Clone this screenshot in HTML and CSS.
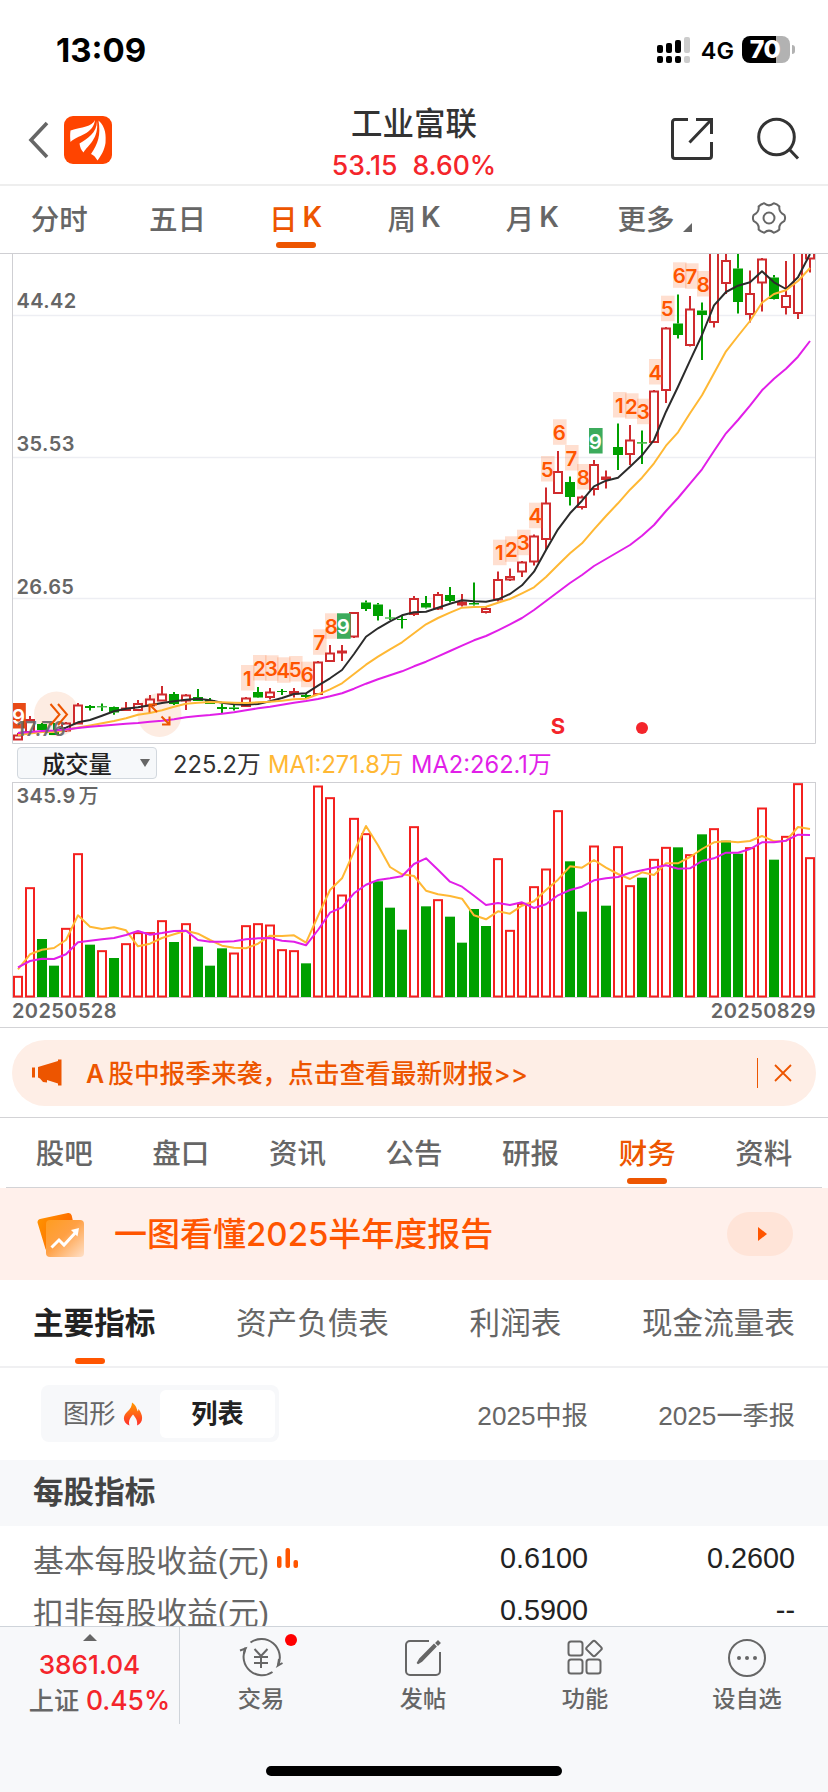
FILE: index.html
```html
<!DOCTYPE html>
<html lang="zh-CN">
<head>
    <meta charset="UTF-8">
    <meta name="viewport" content="width=device-width, initial-scale=1.0">
    <title>工业富联</title>
    <link rel="stylesheet" href="styles.css">
</head>
<body>
    <div class="app">
        <!-- Status bar -->
        <div class="status-bar">
            <div class="time">13:09</div>
            <div class="status-right">
                <svg class="signal" width="34" height="27" viewBox="0 0 34 27">
                    <g fill="#000">
                        <rect x="0" y="9" width="6" height="8" rx="2"/><rect x="9" y="7" width="6" height="10" rx="2"/><rect x="18" y="4" width="6" height="13" rx="2"/>
                        <rect x="0" y="20" width="6" height="7" rx="2"/><rect x="9" y="20" width="6" height="7" rx="2"/><rect x="18" y="20" width="6" height="7" rx="2"/>
                    </g>
                    <g fill="#ccc"><rect x="27" y="1" width="6" height="16" rx="2"/><rect x="27" y="20" width="6" height="7" rx="2"/></g>
                </svg>
                <span class="network">4G</span>
                <div class="battery">70</div>
            </div>
        </div>

        <!-- Header -->
        <header class="header">
            <div class="header-left">
                <svg class="back" width="22" height="38" viewBox="0 0 22 38"><path d="M19 2L3 19l16 17" fill="none" stroke="#666" stroke-width="3.6"/></svg>
                <svg width="48" height="48" viewBox="0 0 48 48">
                    <rect width="48" height="48" rx="9" fill="#ff4400"/>
                    <g fill="#fff">
                        <path d="M31 4C28 11 18 11 6.500 14.500C6 18 6 22 6.500 26C13 19 29 19 31 4z"/>
                        <path d="M33 5C33 17 23 23 15.500 27.500C16 31 17 34 19.500 36.500C24 29 35 23 33 5z"/>
                        <path d="M34.500 4.500C42 11 42 20 41.500 27C40.500 34 37 40 33.500 44.500C31.500 41 29.500 39 27 38C34 28 37 19 34.500 4.500z"/>
                    </g>
                </svg>
            </div>
            <div class="header-title">
                <h1>工业富联</h1>
                <div class="quote"><span>53.15</span><span>8.60%</span></div>
            </div>
            <div class="header-right">
                <svg width="44" height="44" viewBox="0 0 44 44" fill="none" stroke="#333" stroke-width="3">
                    <path d="M18 2.500H5a2.500 2.500 0 0 0-2.500 2.500v34a2.500 2.500 0 0 0 2.500 2.500h34a2.500 2.500 0 0 0 2.500-2.500V25M26 2.500h15.500V17M41.500 2.500L19.500 25.500"/>
                </svg>
                <svg width="44" height="44" viewBox="0 0 44 44" fill="none" stroke="#333" stroke-width="3"><circle cx="20.500" cy="20" r="17.800"/><path d="M33 32l9 9.500"/></svg>
            </div>
        </header>

        <!-- Period tabs -->
        <nav class="period-tabs">
            <div class="tab">分时</div>
            <div class="tab">五日</div>
            <div class="tab active">日<b>K</b></div>
            <div class="tab">周<b>K</b></div>
            <div class="tab">月<b>K</b></div>
            <div class="tab">更多<i class="corner"></i></div>
            <div class="tab settings">
                <svg width="36" height="36" viewBox="0 0 36 36" fill="none" stroke="#666" stroke-width="2" stroke-linejoin="round">
                    <path d="M33.200 14.800Q35 18 33.200 21.200Q27.500 24 28.400 29.500Q26 32 22.800 32.700Q18 28.500 13.200 32.700Q10 32 7.600 29.500Q8.500 24 2.800 21.200Q1 18 2.800 14.800Q8.500 12 7.600 6.500Q10 4 13.200 3.300Q18 7.500 22.800 3.300Q26 4 28.400 6.500Q27.500 12 33.200 14.800z"/>
                    <circle cx="18" cy="18" r="5.500"/>
                </svg>
            </div>
        </nav>

        <!-- Charts -->
        <svg class="price-chart" id="priceChart" viewBox="0 253 828 491"></svg>
        <div class="indicator-row">
            <div class="indicator-select">成交量<i class="caret"></i></div>
            <span class="vol">225.2万</span>
            <span class="ma1">MA1:271.8万</span>
            <span class="ma2">MA2:262.1万</span>
        </div>
        <svg class="volume-chart" id="volumeChart" viewBox="0 782 828 216"></svg>
        <div class="date-range"><span>20250528</span><span>20250829</span></div>

        <!-- Notice -->
        <div class="notice">
            <div class="notice-pill">
                <svg width="32" height="28" viewBox="0 0 32 28" fill="#ed5500"><path d="M1 8.500h3v10H1zM7 8l20-6V.500h3.500v26H27v-2l-11-3.500v2.500l-4-.500-3-3.500-2-1z"/></svg>
                <span class="notice-text"><b>A</b>股中报季来袭，点击查看最新财报&gt;&gt;</span>
                <span class="notice-divider"></span>
                <svg width="18" height="18" viewBox="0 0 18 18" stroke="#ed5500" stroke-width="1.800"><path d="M1 1l16 16M17 1L1 17"/></svg>
            </div>
        </div>

        <!-- Content tabs -->
        <nav class="content-tabs">
            <div class="tab">股吧</div>
            <div class="tab">盘口</div>
            <div class="tab">资讯</div>
            <div class="tab">公告</div>
            <div class="tab">研报</div>
            <div class="tab active">财务</div>
            <div class="tab">资料</div>
        </nav>

        <div class="report-banner">
            <svg class="report-icon" width="54" height="54" viewBox="0 0 54 54">
                <defs>
                    <linearGradient id="cardBack" x1="0" y1="0" x2="1" y2="0.4"><stop offset="0" stop-color="#ff9500"/><stop offset="1" stop-color="#ff6200"/></linearGradient>
                    <linearGradient id="cardFront" x1="0" y1="0" x2="1" y2="1"><stop offset="0" stop-color="#ff9d20"/><stop offset="0.450" stop-color="#ffa044"/><stop offset="1" stop-color="#ffe0c8"/></linearGradient>
                </defs>
                <path d="M5 9l28-6q3-.500 3.700 2.500L44 38l-31 3q-2 0-2.500-2L2.500 12.500Q2.500 9.500 5 9z" fill="url(#cardBack)"/>
                <rect x="11" y="10" width="38" height="37" rx="4" fill="url(#cardFront)"/>
                <path d="M16.500 37.500l7.500-7.500 5 5L41 22" fill="none" stroke="#fff" stroke-width="3"/><path d="M36 20l8-2-1.500 8.500z" fill="#fff"/>
            </svg>
            <span class="report-title">一图看懂2025半年度报告</span>
            <span class="report-more"><i></i></span>
        </div>

        <!-- Financial tables -->
        <nav class="finance-tabs">
            <div class="tab active">主要指标</div>
            <div class="tab">资产负债表</div>
            <div class="tab">利润表</div>
            <div class="tab">现金流量表</div>
        </nav>
        <div class="table-head">
            <div class="toggle">
                <div class="toggle-item">图形
                    <svg width="20" height="24" viewBox="0 0 20 24">
                        <defs><linearGradient id="flame" x1="0" y1="0" x2="0" y2="1"><stop offset="0" stop-color="#ff9a00"/><stop offset="1" stop-color="#ff2d2d"/></linearGradient></defs>
                        <path d="M9 .500C14 4 13.500 7.500 15 9.500l.500-2.500C21 14 20 21 14 23.500 15 18 12 15 10 12.500 7 16 5 19 6.500 23.500-.500 21-.500 14 4 10 7.500 7 9 4 9 .500z" fill="url(#flame)"/>
                    </svg>
                </div>
                <div class="toggle-item selected">列表</div>
            </div>
            <span class="col">2025中报</span>
            <span class="col">2025一季报</span>
        </div>
        <div class="section-title">每股指标</div>
        <div class="table-body">
            <div class="row">
                <span class="name">基本每股收益(元)
                    <svg width="22" height="22" viewBox="0 0 22 22" fill="#ff5500"><rect x="0" y="9" width="4.500" height="12" rx="2"/><rect x="8.500" y="1" width="4.500" height="20" rx="2"/><rect x="16.500" y="13" width="4.500" height="8" rx="2"/></svg>
                </span>
                <span class="col">0.6100</span>
                <span class="col">0.2600</span>
            </div>
            <div class="row">
                <span class="name">扣非每股收益(元)</span>
                <span class="col">0.5900</span>
                <span class="col">--</span>
            </div>
        </div>

        <!-- Bottom bar -->
        <footer class="bottom-bar">
            <div class="bottom-items">
                <div class="index">
                    <i class="up"></i>
                    <div class="index-value">3861.04</div>
                    <div class="index-change">上证 <span>0.45%</span></div>
                </div>
                <div class="item">
                    <svg width="46" height="42" viewBox="0 0 46 42" fill="none" stroke="#666" stroke-width="2">
                        <path d="M12.500 5.500A18.500 18.500 0 0 1 40 28.500l4.500-2.500M2 13.500l5.500-2A18.500 18.500 0 0 0 34.500 35"/>
                        <path d="M7.500 10.500L6 17M40 28.500L41 22"/>
                        <path d="M16.500 12l6.500 7 6.500-7M16 20h14M16 26h14M23 19v12"/>
                    </svg>
                    <span>交易</span>
                    <em class="dot"></em>
                </div>
                <div class="item">
                    <svg width="42" height="42" viewBox="0 0 42 42" fill="none" stroke="#666" stroke-width="2">
                        <path d="M27 4H8a4 4 0 0 0-4 4v26a4 4 0 0 0 4 4h26a4 4 0 0 0 4-4V15"/>
                        <path d="M15.500 26.500l2.500-4.500L32 8l1.500 1.500L19.500 24z M34.500 6l1.500-1.500 1.500 1.500L36 7.500z" fill="#666"/>
                    </svg>
                    <span>发帖</span>
                </div>
                <div class="item">
                    <svg width="42" height="42" viewBox="0 0 42 42" fill="none" stroke="#666" stroke-width="2">
                        <rect x="4.500" y="4.500" width="14" height="14" rx="2.500"/><rect x="4.500" y="22.500" width="14" height="14" rx="2.500"/><rect x="22.500" y="22.500" width="14" height="14" rx="2.500"/>
                        <rect x="24" y="5.500" width="12" height="12" rx="2" transform="rotate(45 30 11.500)"/>
                    </svg>
                    <span>功能</span>
                </div>
                <div class="item">
                    <svg width="42" height="42" viewBox="0 0 42 42"><circle cx="21" cy="21" r="18" fill="none" stroke="#666" stroke-width="2"/><g fill="#666"><circle cx="13" cy="21" r="2"/><circle cx="21" cy="21" r="2"/><circle cx="29" cy="21" r="2"/></g></svg>
                    <span>设自选</span>
                </div>
            </div>
            <div class="home-indicator"></div>
        </footer>
    </div>

    <script src="chart.js"></script>
</body>
</html>
```
FILE: styles.css
```css
:root {
    --orange: #ed5500;
    --bright-orange: #ff5500;
    --red: #f4252b;
    --gray: #666;
    --line: #d3d3d6;
    --panel: #f7f8fa;
}

* {
    margin: 0;
    padding: 0;
    box-sizing: border-box;
}

body {
    font-family: Inter, 'Noto Sans CJK SC', sans-serif;
    background: #fff;
    color: #222;
}

svg {
    display: block;
    flex: none;
}

i,
em,
b {
    font-style: normal;
    font-weight: inherit;
}

.app {
    width: 828px;
    height: 1792px;
    overflow: hidden;
    display: flex;
    flex-direction: column;
}

.app > * {
    flex: none;
}

/* Status bar */
.status-bar {
    height: 94px;
    padding: 5px 33px 0 56px;
    display: flex;
    justify-content: space-between;
    align-items: center;
    color: #000;
}

.time {
    font-size: 33px;
    font-weight: 700;
}

.status-right {
    display: flex;
    align-items: center;
}

.network {
    margin: 2px 8px 0 10px;
    font-size: 23.5px;
    font-weight: 600;
}

.battery {
    position: relative;
    width: 48px;
    height: 27px;
    margin-right: 5px;
    padding-right: 2px;
    border-radius: 8px;
    background: linear-gradient(90deg, #000 71%, #b2b2b2 71%);
    color: #fff;
    font-size: 25px;
    font-weight: 800;
    line-height: 27px;
    text-align: center;
    letter-spacing: -0.5px;
}

.battery::after {
    content: "";
    position: absolute;
    right: -5px;
    top: 9px;
    width: 3px;
    height: 9px;
    border-radius: 0 4px 4px 0;
    background: #b2b2b2;
}

/* Header */
.header {
    height: 92px;
    padding: 0 28px;
    display: grid;
    grid-template-columns: 1fr auto 1fr;
    border-bottom: 2px solid #eee;
}

.header-left {
    display: flex;
    align-items: center;
    gap: 14px;
    padding-top: 2px;
}

.header-right {
    display: flex;
    align-items: center;
    justify-content: flex-end;
    gap: 42px;
}

.header-title {
    text-align: center;
    padding-top: 11px;
}

.header-title h1 {
    font-size: 31.5px;
    font-weight: 500;
    line-height: 38px;
    color: #333;
}

.quote {
    display: flex;
    gap: 15px;
    margin-top: 5px;
    font-size: 26.6px;
    font-weight: 500;
    line-height: 34px;
    color: var(--red);
}

/* Period tabs */
.period-tabs {
    height: 67px;
    display: flex;
    padding-bottom: 3px;
}

.tab {
    position: relative;
    display: flex;
    align-items: center;
    justify-content: center;
    padding-bottom: 2px;
    color: var(--gray);
    font-size: 28.5px;
    font-weight: 500;
}

.period-tabs .tab,
.content-tabs .tab {
    flex: 1;
}

.period-tabs .settings {
    padding: 0;
}

.tab b {
    margin-left: 5px;
    font-weight: 600;
    font-size: 28px;
}

.tab.active {
    color: var(--orange);
}

.tab.active::after {
    content: "";
    position: absolute;
    left: 50%;
    bottom: 2px;
    width: 40px;
    height: 6px;
    margin-left: -20px;
    border-radius: 3px;
    background: var(--orange);
}

.corner {
    margin: 20px -8px 0 8px;
    border-left: 9px solid transparent;
    border-bottom: 9px solid var(--gray);
}

/* Charts */
.price-chart {
    width: 828px;
    height: 491px;
}

.volume-chart {
    width: 828px;
    height: 216px;
}

.axis-label {
    font-size: 20px;
    font-weight: 600;
    letter-spacing: 0.4px;
    fill: var(--gray);
}

.axis-label .unit {
    font-weight: 500;
}

.mark {
    font-size: 20.5px;
    font-weight: 600;
    text-anchor: middle;
    fill: var(--bright-orange);
}

.mark.light {
    fill: #fff;
}

.signal-s {
    font-size: 22px;
    font-weight: 700;
    text-anchor: middle;
    fill: var(--red);
}

.indicator-row {
    height: 38px;
    padding-left: 17px;
    display: flex;
    align-items: center;
    font-size: 23.7px;
}

.indicator-select {
    width: 140px;
    height: 32px;
    padding: 0 6px 0 24px;
    display: flex;
    align-items: center;
    justify-content: space-between;
    border: 1px solid #d2d8de;
    border-radius: 4px;
    background: #f6f8fa;
    font-size: 23.3px;
    font-weight: 500;
}

.caret {
    border-left: 5px solid transparent;
    border-right: 5px solid transparent;
    border-top: 8px solid var(--gray);
}

.vol {
    width: 95px;
    margin-left: 16px;
    color: #333;
}

.ma1 {
    width: 143px;
    color: #ffb834;
}

.ma2 {
    color: #e11fe8;
}

.date-range {
    height: 30px;
    padding: 0 12px;
    display: flex;
    justify-content: space-between;
    align-items: center;
    padding-bottom: 4px;
    border-bottom: 1px solid var(--line);
    color: var(--gray);
    font-size: 20px;
    font-weight: 600;
    letter-spacing: 0.4px;
}

/* Notice */
.notice {
    height: 90px;
    padding: 12px 12px 11px;
    border-bottom: 1px solid var(--line);
}

.notice-pill {
    height: 66px;
    padding: 0 24px 0 19px;
    display: flex;
    align-items: center;
    border-radius: 33px;
    background: #feeee6;
}

.notice-text {
    flex: 1;
    margin-left: 23px;
    padding-bottom: 3px;
    color: var(--orange);
    font-size: 25.7px;
    font-weight: 500;
}

.notice-text b {
    margin-right: 4px;
    font-size: 25px;
    font-weight: 600;
}

.notice-divider {
    width: 1px;
    height: 30px;
    margin-right: 16px;
    background: var(--orange);
}

/* Content tabs */
.content-tabs {
    height: 70px;
    margin: 0 6px;
    display: flex;
    border-bottom: 1px solid var(--line);
}

.content-tabs .tab.active::after {
    bottom: 3px;
}

.report-banner {
    height: 92px;
    padding: 0 35px;
    display: flex;
    align-items: center;
    background: #fff0eb;
}

.report-icon {
    margin-top: 5px;
}

.report-title {
    flex: 1;
    margin-left: 25px;
    padding-bottom: 4px;
    color: var(--bright-orange);
    font-size: 33px;
    font-weight: 500;
}

.report-more {
    width: 66px;
    height: 44px;
    display: flex;
    align-items: center;
    justify-content: center;
    border-radius: 22px;
    background: #ffe4d8;
}

.report-more i {
    margin-left: 4px;
    border-top: 7px solid transparent;
    border-bottom: 7px solid transparent;
    border-left: 9px solid var(--bright-orange);
}

/* Financial tables */
.finance-tabs {
    height: 88px;
    padding: 0 33px;
    display: flex;
    justify-content: space-between;
    border-bottom: 2px solid #f0f0f2;
}

.finance-tabs .tab {
    padding-bottom: 4px;
    font-size: 30.6px;
    font-weight: 400;
}

.finance-tabs .tab.active {
    color: #222;
    font-weight: 700;
}

.finance-tabs .tab.active::after {
    width: 30px;
    margin-left: -19px;
    background: var(--bright-orange);
}

.table-head {
    height: 92px;
    padding: 0 33px 0 41px;
    display: grid;
    grid-template-columns: 1fr 200px 207px;
    align-items: center;
    font-family: 'Liberation Sans', 'Noto Sans CJK SC', sans-serif;
    font-size: 26.2px;
    color: var(--gray);
}

.col {
    text-align: right;
}

.table-head .col {
    padding-bottom: 1px;
}

.toggle {
    width: 238px;
    height: 57px;
    margin-top: -2px;
    padding: 5px 4px 4px;
    display: flex;
    border-radius: 8px;
    background: var(--panel);
}

.toggle-item {
    width: 115px;
    padding: 0 0 3px 18px;
    display: flex;
    align-items: center;
    gap: 8px;
}

.toggle-item svg {
    margin-top: 4px;
}

.toggle-item.selected {
    padding: 0 0 3px;
    justify-content: center;
    border-radius: 6px;
    background: #fff;
    color: #222;
    font-weight: 700;
}

.section-title {
    height: 66px;
    padding-left: 33px;
    background: var(--panel);
    color: #444;
    font-size: 30.6px;
    font-weight: 700;
    line-height: 64px;
}

.table-body {
    height: 100px;
    padding: 6px 33px 0;
    overflow: hidden;
    font-family: 'Liberation Sans', 'Noto Sans CJK SC', sans-serif;
}

.row {
    height: 52px;
    display: grid;
    grid-template-columns: 1fr 200px 207px;
    align-items: center;
    font-size: 28.8px;
}

.name {
    display: flex;
    align-items: center;
    gap: 8px;
    font-size: 30.8px;
    color: var(--gray);
}

/* Bottom bar */
.bottom-bar {
    height: 166px;
    border-top: 1px solid #cfd4da;
    background: var(--panel);
}

.bottom-items {
    height: 97px;
    display: flex;
}

.index {
    width: 180px;
    padding-top: 7px;
    display: flex;
    flex-direction: column;
    align-items: center;
    border-right: 1px solid #cfd4da;
}

.up {
    border-left: 7px solid transparent;
    border-right: 7px solid transparent;
    border-bottom: 7px solid var(--gray);
}

.index-value {
    margin-top: 7px;
    color: var(--red);
    font-size: 26.2px;
    font-weight: 500;
    line-height: 34px;
}

.index-change {
    padding-left: 20px;
    color: var(--gray);
    font-size: 25.2px;
    font-weight: 500;
    line-height: 36px;
    white-space: nowrap;
}

.index-change span {
    color: var(--red);
    font-size: 26.4px;
}

.item {
    position: relative;
    flex: 1;
    padding-top: 10px;
    display: flex;
    flex-direction: column;
    align-items: center;
    color: var(--gray);
    font-size: 23.2px;
    font-weight: 500;
}

.item span {
    margin-top: 3px;
    line-height: 34px;
}

.dot {
    position: absolute;
    left: 105px;
    top: 7px;
    width: 12px;
    height: 12px;
    border-radius: 50%;
    background: #ff0000;
}

.home-indicator {
    width: 296px;
    height: 10px;
    margin: 42px auto 0;
    border-radius: 5px;
    background: #000;
}
```
FILE: chart.js
```js
// candle: [open/close top, open/close bottom, high, low, up(1)/down(0)]
const candles = [
    [735, 740, 733, 740, 1], [719.500, 733, 716, 733, 1], [724, 730, 723, 731, 0], [732, 735, 723, 735, 0], [723, 731, 722, 732, 1],
    [705, 724, 703, 724, 1], [706, 708, 705, 710.500, 0], [706.300, 707.300, 703.500, 711, 0], [707, 712.500, 706.500, 714.700, 0], [708, 710.500, 702, 711, 1],
    [703.500, 710.500, 700, 711, 1], [699, 706, 695, 706, 1], [694, 701, 686, 701, 1], [694, 704, 692, 705, 0], [695, 701, 694, 710, 1],
    [697, 701, 689, 701, 0], [700, 704, 698, 704, 0], [707, 709, 704, 714, 0], [707.500, 709, 704.500, 710.500, 0], [698, 706.500, 697, 707, 1],
    [692, 697.500, 687, 698, 0], [692, 697.500, 688, 699.500, 1], [691, 692, 689, 695, 0], [691.500, 694, 688, 697.500, 1], [695, 697, 694, 698, 0],
    [662, 694.500, 661, 695, 1], [653, 661.500, 645, 662, 1], [651, 653, 645, 661, 1], [612.500, 637, 612, 638, 1], [602.500, 609, 600.500, 611, 0],
    [604.500, 616, 603, 620.500, 0], [617.500, 618.500, 609.500, 620, 0], [619, 620, 615, 628.500, 0], [598.500, 614.500, 596, 616, 1], [603, 607.500, 596, 608.500, 0],
    [594.500, 609, 592, 610, 1], [595, 601, 587, 602.500, 0], [602, 605, 594, 606.500, 1], [603, 604.500, 582.500, 605.500, 0], [608.500, 612.500, 606.500, 613.500, 1],
    [579.500, 600, 571.500, 601.500, 1], [576.500, 580, 568.500, 581, 1], [562, 572, 561, 577, 1], [536, 562, 534.500, 565.500, 1], [503, 539.500, 487.500, 550, 1],
    [471.500, 493.500, 451, 494, 1], [482, 497, 476.500, 505.500, 0], [497, 507.500, 495.500, 509.500, 1], [464.500, 489.500, 460, 495.500, 1], [477, 479.500, 470.500, 488.500, 1],
    [447, 455, 423.500, 470, 0], [440, 454.500, 425, 465, 1], [442.300, 443.500, 430.500, 464, 0], [391, 442.500, 390, 443, 1], [328, 390.500, 327, 403, 1],
    [323.500, 335, 294.500, 338.500, 0], [309, 345.500, 296, 346.500, 1], [310.500, 315, 302.500, 360, 0], [240, 322.500, 240, 327.500, 1], [260.500, 283.500, 250, 294, 1],
    [268.500, 302, 250, 313.500, 0], [293.500, 314.500, 270.500, 322.500, 1], [259, 283, 258, 311.500, 1], [277.500, 299, 275, 299.500, 0], [295.500, 307.500, 261, 314.500, 1],
    [240, 313.500, 240, 319, 1], [240, 259, 240, 272.500, 1]
];

const maShort = [733, 732, 732, 730.7, 727.7, 722.3, 720, 715.7, 711.3, 708.7, 707.3, 705.3, 703, 701.3, 699.7, 698.7, 700.3, 702.7, 704.3, 704.7, 704, 701.3, 698, 694, 693.3, 685.7, 678.3, 670, 654, 636.7, 628.3, 621.3, 615.3, 612.3, 611.7, 607.7, 603.7, 600.3, 601.3, 601.7, 599.3, 594, 585.3, 571.7, 550, 529.3, 513.3, 500.7, 486.3, 480.7, 477.7, 466.7, 455.3, 440, 411.7, 386.7, 360.7, 335, 305.3, 292, 285.7, 282.3, 271.3, 282.3, 289, 277.3, 254];
const maMid = [735, 733.5, 732, 732, 730, 727.5, 725.5, 723.3, 721, 718.3, 714.7, 713, 710.3, 706.7, 703.7, 702.7, 702, 702.3, 702.7, 703, 702.3, 701.7, 700.7, 699.3, 698.7, 694.3, 689.3, 683.3, 674, 664.7, 656.7, 649.3, 642.3, 633.3, 624.3, 618, 612.7, 607.7, 607, 606.7, 602.7, 599, 593.3, 587.3, 577, 565, 553.3, 543.3, 529.3, 516, 503.3, 489.7, 477.7, 463.3, 445.7, 432.3, 413.3, 395.3, 373.3, 351.3, 336, 321, 302.7, 294, 290.3, 281, 268];
const maLong = [733, 732, 731, 730.5, 729.5, 728, 726.7, 725.7, 724.7, 723.7, 723, 721.7, 720.7, 719.3, 717.3, 716, 715, 713.7, 712.3, 710.3, 708.3, 706.7, 704.7, 702.7, 701, 699, 696.3, 693.3, 688.7, 683.7, 679.3, 675.3, 671.3, 666.3, 661.7, 656.3, 651, 645.7, 640.3, 636, 630.3, 624.3, 618, 610, 601, 592, 583, 575, 566, 559, 552, 545, 535.7, 525, 511, 498, 483.7, 469.3, 451, 433.3, 420, 405.7, 390.3, 378.7, 368.7, 356.7, 341];

// sequence marks: [candle index, digit, top, type]
const marks = [
    [19, 1, 665], [20, 2, 655], [21, 3, 655.3], [22, 4, 657.3], [23, 5, 656], [24, 6, 661.7], [25, 7, 629.3], [26, 8, 613.3], [27, 9, 613.3, 'green'],
    [40, 1, 539.7], [41, 2, 536.3], [42, 3, 529.7], [43, 4, 502.7], [44, 5, 456], [45, 6, 419.3], [46, 7, 445], [47, 8, 464], [48, 9, 428, 'green'],
    [50, 1, 392], [51, 2, 393.3], [52, 3, 398.7], [53, 4, 359], [54, 5, 295.7], [55, 6, 262.3], [56, 7, 263.3], [57, 8, 271],
    [0, 9, 703, 'red']
];

// volume series, in thirds of a pixel below y = 740
const volumes = [709, 443, 597, 677, 565, 341, 614, 632, 654, 611, 578, 578, 542, 606, 551, 620, 677, 625, 639, 557, 551, 555, 629, 632, 670, 138, 173, 465, 235, 281, 424, 503, 569, 260, 499, 479, 530, 608, 507, 558, 356, 571, 490, 440, 387, 212, 364, 515, 318, 497, 320, 437, 413, 358, 322, 322, 344, 283, 266, 302, 341, 323, 204, 359, 289, 131, 353];
const volumeDown = [2, 3, 6, 8, 13, 15, 16, 17, 24, 30, 31, 32, 34, 36, 37, 38, 39, 46, 47, 49, 52, 55, 57, 59, 60, 63];
const volMa1 = [688, 643, 629, 624, 600, 526, 560, 567, 562, 571, 619, 611, 594, 583, 572, 581, 600, 617, 623, 625, 611, 587, 588, 586, 608, 528, 450, 415, 335, 258, 316, 381, 403, 408, 452, 463, 468, 476, 526, 538, 514, 521, 497, 484, 450, 419, 379, 383, 360, 383, 402, 417, 397, 405, 370, 370, 351, 327, 307, 304, 307, 303, 288, 304, 303, 261, 267];
const volMa2 = [682, 663, 656, 657, 643, 607, 602, 598, 594, 585, 573, 584, 579, 573, 572, 600, 605, 605, 604, 598, 595, 594, 602, 605, 616, 570, 518, 502, 460, 434, 420, 415, 409, 372, 355, 389, 425, 440, 467, 495, 489, 495, 487, 504, 493, 466, 450, 440, 421, 415, 411, 398, 391, 383, 376, 386, 385, 363, 355, 338, 338, 327, 307, 307, 302, 284, 285];

const cx = i => 18 + i * 12;
const volY = v => 740 + v / 3;

function line(values, color, width) {
    const points = values.map((y, i) => cx(i) + ',' + y.toFixed(1)).join(' ');
    return `<polyline points="${points}" fill="none" stroke="${color}" stroke-width="${width}" stroke-linejoin="round"/>`;
}

function drawPrice() {
    let html = '<path d="M13 315.500H815M13 457.500H815M13 598.500H815" stroke="#edeef3" stroke-width="1.500"/>';
    html += '<g fill="#fdece2"><circle cx="56.500" cy="714" r="22.500"/><circle cx="159.500" cy="715" r="22"/></g>';

    candles.forEach(([top, bottom, high, low, up], i) => {
        const x = cx(i);
        const color = up ? '#cf2b2e' : '#00a000';
        html += `<path d="M${x} ${high}V${top}M${x} ${bottom}V${low}" stroke="${color}" stroke-width="2"/>`;
        if (up) {
            html += `<rect x="${x - 4}" y="${top + 0.5}" width="8" height="${Math.max(bottom - top - 1, 1)}" fill="#fff" stroke="${color}" stroke-width="2"/>`;
        } else {
            html += `<rect x="${x - 5}" y="${top}" width="10" height="${bottom - top}" fill="${color}"/>`;
        }
    });

    html += line(maShort, '#2b2b2b', 2) + line(maMid, '#ffb834', 2) + line(maLong, '#e11fe8', 2);

    const fills = { green: '#3cab5c', red: '#e84a17' };
    marks.forEach(([i, digit, top, type]) => {
        const x = i === 0 ? 19 : cx(i) + 1.8;
        const fill = type ? fills[type] : 'rgba(255, 110, 40, 0.22)';
        html += `<rect x="${x - 6.8}" y="${top}" width="13.600" height="25.500" fill="${fill}"/>`;
        html += `<text x="${x - 0.5}" y="${top + 20.5}" class="mark${type ? ' light' : ''}">${digit}</text>`;
    });

    // axis labels
    html += '<text x="16.500" y="308" class="axis-label">44.42</text><text x="16.500" y="451" class="axis-label">35.53</text>';
    html += '<text x="16.500" y="593.500" class="axis-label">26.65</text><text x="16.500" y="736" class="axis-label" opacity="0.9">17.76</text>';

    // expand and zoom handles
    html += '<path d="M50.500 704l9 10.500-9 10.500M58 704l9 10.500-9 10.500" fill="none" stroke="#ed5500" stroke-width="2"/>';
    html += '<path d="M157 704.500h-7.500v8M149.500 704.500l7.500 7.500M162 724.500h7.500v-8M169.500 724.500l-8-8" fill="none" stroke="#ed5500" stroke-width="2"/>';

    // trade signals
    html += '<text x="558" y="733.500" class="signal-s">S</text><circle cx="642" cy="728" r="6" fill="#f4252b"/>';
    html += '<rect x="816" y="253" width="12" height="491" fill="#fff"/>';
    html += '<path d="M0 253.500H828M12.500 254V743.500H815.500V254" fill="none" stroke="#cfcfd3"/>';
    document.getElementById('priceChart').innerHTML = html;
}

function drawVolume() {
    let html = '<rect x="12.500" y="782.500" width="803" height="215" fill="none" stroke="#cfcfd3"/>';
    volumes.forEach((v, i) => {
        const x = cx(i);
        const y = volY(v);
        if (volumeDown.includes(i)) {
            html += `<rect x="${x - 5}" y="${y}" width="10" height="${997 - y}" fill="#00a000"/>`;
        } else {
            html += `<rect x="${x - 4}" y="${y + 0.5}" width="8" height="${996 - y}" fill="#fff" stroke="#f4211f" stroke-width="2"/>`;
        }
    });
    html += line(volMa1.map(volY), '#ffb834', 2) + line(volMa2.map(volY), '#e11fe8', 2);
    html += '<text x="16.500" y="803" class="axis-label">345.9<tspan class="unit" dx="3">万</tspan></text>';
    document.getElementById('volumeChart').innerHTML = html;
}

drawPrice();
drawVolume();
```
